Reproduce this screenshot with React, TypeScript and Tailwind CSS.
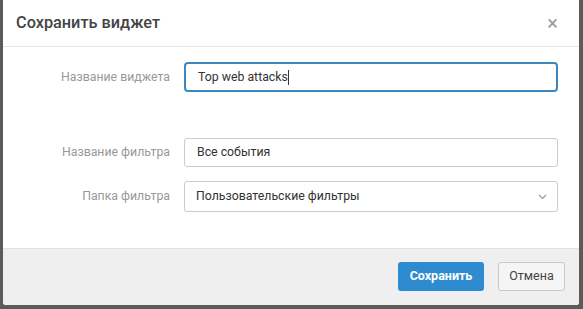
import React from 'react';

export default function App() {
  return (
    <div className="w-[583px] h-[309px] bg-[#5b5b5b] pl-[3px] overflow-hidden" style={{ fontFamily: 'Roboto, "Liberation Sans", sans-serif' }}>
      <div className="w-[576px] h-[305px] bg-white flex flex-col rounded-b-[3px] overflow-hidden">
        {/* Header */}
        <div className="h-[47px] border-b border-[#e5e5e5] flex items-center justify-between pl-[13px] pr-[21px]">
          <h2 className="text-[16.3px] text-[#444] font-medium">Сохранить виджет</h2>
          <span className="text-[20px] leading-none text-[#999]">×</span>
        </div>

        {/* Body */}
        <div className="flex-1 pt-[15px] pr-[21px] text-[12.3px]">
          <div className="flex items-center">
            <label className="w-[167px] text-right text-[#999]">Название виджета</label>
            <div className="ml-[14px] flex-1 h-[30px] border-2 border-[#3b87bf] rounded-[4px] flex items-center pl-[12px] text-[#333]">
              Top web attacks<span className="w-px h-[15px] bg-[#333]" />
            </div>
          </div>

          <div className="flex items-center mt-[46px]">
            <label className="w-[167px] text-right text-[#999]">Название фильтра</label>
            <div className="ml-[14px] flex-1 h-[29px] border border-[#ccc] rounded-[3px] flex items-center pl-[12px] text-[#333]">
              Все события
            </div>
          </div>

          <div className="flex items-center mt-[14px]">
            <label className="w-[167px] text-right text-[#999]">Папка фильтра</label>
            <div className="ml-[14px] flex-1 h-[31px] border border-[#ccc] rounded-[3px] flex items-center justify-between pl-[11px] pr-[10px] text-[#333]">
              <span>Пользовательские фильтры</span>
              <svg width="9" height="6" viewBox="0 0 9 6" fill="none" stroke="#999" strokeWidth="1.2">
                <path d="M1 1l3.5 3.5L8 1" />
              </svg>
            </div>
          </div>
        </div>

        {/* Footer */}
        <div className="h-[57px] bg-[#efefef] border-t border-[#e2e2e2] flex items-center justify-end gap-[14px] pr-[14px] pb-[2px]">
          <button className="h-[29px] w-[86px] rounded-[3px] bg-[#2f8bd0] text-white text-[12.5px] font-bold">Сохранить</button>
          <button className="h-[29px] w-[67px] rounded-[3px] border border-[#c8c8c8] bg-[#f5f5f5] text-[#444] text-[12.5px]">Отмена</button>
        </div>
      </div>
    </div>
  );
}
